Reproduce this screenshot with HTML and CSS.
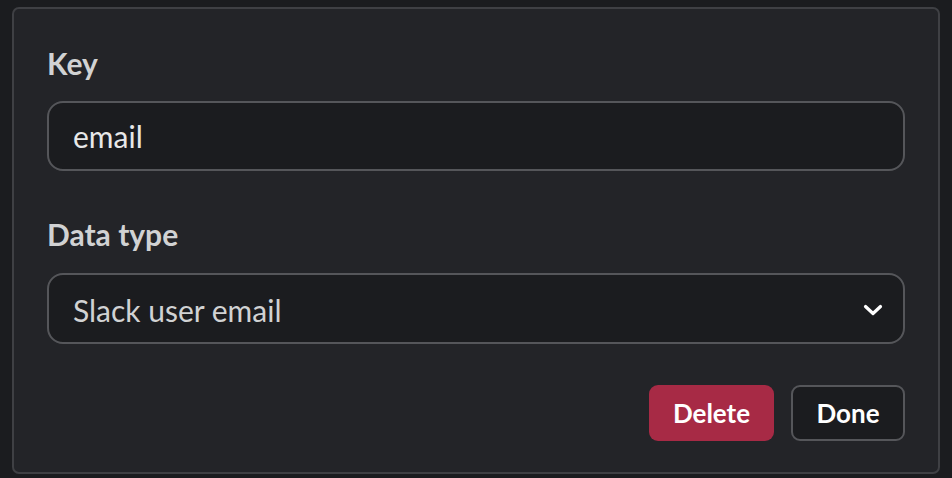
FILE: index.html
```html
<!DOCTYPE html>
<html>
<head>
    <meta charset="UTF-8">
    <title>Edit field</title>
    <link rel="stylesheet" href="styles.css">
</head>
<body>
    <div class="panel">
        <label class="label" for="key">Key</label>
        <div class="field">
            <input id="key" class="input" type="text" value="email">
        </div>

        <label class="label label-gap">Data type</label>
        <div class="field select">
            <span>Slack user email</span>
            <svg class="chevron" width="20" height="12" viewBox="0 0 20 12">
                <path d="M2.5 2.5 L10 9.5 L17.5 2.5" fill="none" stroke="#fff" stroke-width="3.2" stroke-linecap="round" stroke-linejoin="round"/>
            </svg>
        </div>

        <div class="actions">
            <button class="btn btn-danger">Delete</button>
            <button class="btn btn-plain">Done</button>
        </div>
    </div>
</body>
</html>
```

FILE: styles.css
```css
body {
    margin: 0;
    background: #1b1c1f;
    font-family: 'Lato', 'Noto Sans', sans-serif;
    color: #d1d2d3;
}
.panel {
    width: 928px;
    height: 467px;
    box-sizing: border-box;
    margin: 7px 0 0 12px;
    padding: 36px 33px 0 33px;
    background: #232428;
    border: 2px solid #3f4044;
    border-radius: 7px;
}
.label {
    display: block;
    font-size: 30px;
    font-weight: bold;
    line-height: 36px;
    color: #d1d2d3;
}
.label-gap {
    margin-top: 45px;
}
.field {
    margin-top: 20px;
    height: 70px;
    box-sizing: border-box;
    border: 2px solid #55565a;
    border-radius: 16px;
    background: #1b1c1f;
}
.input {
    width: 100%;
    height: 100%;
    box-sizing: border-box;
    padding: 0 24px;
    border: none;
    outline: none;
    background: transparent;
    font-family: inherit;
    font-size: 30px;
    color: #e8e8e8;
}
.select {
    margin-top: 21px;
    height: 71px;
    display: flex;
    align-items: center;
    justify-content: space-between;
    padding: 2px 20px 0 24px;
    font-size: 30px;
    color: #d1d2d3;
}
.actions {
    display: flex;
    justify-content: flex-end;
    gap: 17px;
    margin-top: 41px;
}
.btn {
    height: 56px;
    box-sizing: border-box;
    border-radius: 9px;
    font-family: inherit;
    font-size: 26px;
    font-weight: bold;
    color: #fff;
    cursor: pointer;
}
.btn-danger {
    width: 125px;
    background: #a72a45;
    border: none;
}
.btn-plain {
    width: 114px;
    background: #1b1c1f;
    border: 2px solid #55565a;
}
```
